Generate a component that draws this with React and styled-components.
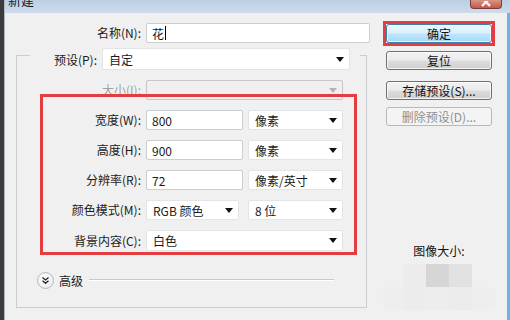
import React from 'react';
import styled, { createGlobalStyle, css } from 'styled-components';

const Global = createGlobalStyle`
  html, body { margin: 0; padding: 0; background: #f0f0f0; }
  body {
    font-family: "Noto Sans CJK SC", "Microsoft YaHei", "Liberation Sans", sans-serif;
    font-size: 12px;
    color: #1b1b1b;
  }
`;

const Screen = styled.div`
  width: 510px;
  height: 320px;
  overflow: hidden;
  display: flex;
  background: #f0f0f0;
`;

const DarkEdge = styled.div`
  width: 4px;
  flex: none;
  background: #3b3b3b;
`;

const Window = styled.div`
  flex: 1;
  display: flex;
  flex-direction: column;
  border-left: 1px solid #aeb8c2;
`;

const TitleBar = styled.div`
  height: 13px;
  flex: none;
  display: flex;
  align-items: flex-start;
  overflow: hidden;
  background: linear-gradient(#bccfe3, #cddced);
`;

const Title = styled.div`
  font-size: 13px;
  line-height: 16px;
  margin: -8px 0 0 3px;
  color: #1a1a1a;
`;

const CloseBtn = styled.div`
  margin-left: auto;
  margin-right: 8px;
  width: 30px;
  height: 8px;
  display: flex;
  justify-content: center;
  align-items: flex-end;
  border: 1px solid #7d3c33;
  border-top: none;
  border-radius: 0 0 4px 4px;
  background: linear-gradient(#d99486, #c4584a);
  overflow: hidden;
`;

const Body = styled.div`
  flex: 1;
  display: flex;
  border-right: 3px solid #6eb2e4;
`;

const Main = styled.div`
  width: 354px;
  padding: 10px 0 0 11px;
  display: flex;
  flex-direction: column;
`;

const Row = styled.div`
  display: flex;
  align-items: center;
  gap: 5px;
  height: ${p => p.$h || 20}px;
`;

const Label = styled.div`
  width: ${p => p.$w}px;
  flex: none;
  text-align: right;
  white-space: nowrap;
  line-height: 20px;
  color: ${p => (p.$disabled ? '#a3a3a3' : '#1b1b1b')};
`;

const TextBox = styled.div`
  width: ${p => (p.$w ? `${p.$w}px` : 'auto')};
  flex: ${p => (p.$w ? 'none' : '1')};
  height: 20px;
  box-sizing: border-box;
  border: 1px solid #c9ced3;
  border-radius: 2px;
  background: #fff;
  padding-left: 5px;
  display: flex;
  align-items: center;
  color: #1a1a1a;
  font-size: 12px;
`;

const Caret = styled.span`
  width: 1px;
  height: 14px;
  background: #000;
  margin-left: 1px;
`;

const SelectBox = styled.div`
  width: ${p => p.$w}px;
  flex: none;
  height: ${p => p.$h || 20}px;
  box-sizing: border-box;
  margin-left: ${p => p.$ml || 0}px;
  border: 1px solid ${p => (p.$disabled ? '#c6c6c6' : '#e2e4e6')};
  border-radius: 2px;
  background: ${p => (p.$disabled ? '#f0f0f0' : '#fff')};
  display: flex;
  align-items: center;
  padding: 0 5px 0 6px;
  color: #1a1a1a;
`;

const SelectValue = styled.span`
  flex: 1;
  white-space: nowrap;
`;

const Arrow = ({ disabled }) => (
  <svg width="8" height="5" viewBox="0 0 8 5">
    <path d="M0 0 H8 L4 5 Z" fill={disabled ? '#b4b4b4' : '#111'} />
  </svg>
);

const Select = ({ w, h, ml, value, disabled }) => (
  <SelectBox $w={w} $h={h} $ml={ml} $disabled={disabled}>
    <SelectValue>{value}</SelectValue>
    <Arrow disabled={disabled} />
  </SelectBox>
);

const Group = styled.div`
  width: 351px;
  margin-top: 5px;
  display: flex;
  flex-direction: column;
`;

const GroupHeader = styled.div`
  display: flex;
  align-items: center;
  height: 22px;
`;

const lineColor = '#c8cdd2';

const CornerLeft = styled.div`
  width: 13px;
  height: 14px;
  align-self: flex-end;
  border-top: 1px solid ${lineColor};
  border-left: 1px solid ${lineColor};
`;

const CornerRight = styled.div`
  flex: 1;
  height: 14px;
  margin-left: 10px;
  align-self: flex-end;
  border-top: 1px solid ${lineColor};
  border-right: 1px solid ${lineColor};
`;

const LegendLabel = styled.div`
  width: 67px;
  text-align: right;
  margin-right: 5px;
  white-space: nowrap;
`;

const GroupBody = styled.div`
  border: 1px solid ${lineColor};
  border-top: none;
  padding: 10px 0 19px 0;
  display: flex;
  flex-direction: column;
`;

const Highlight = styled.div`
  position: relative;
  width: 311px;
  margin: -6px 0 0 23px;
  border: 3px solid #e43d3f;
  padding: 13px 0 1px 0;
  display: flex;
  flex-direction: column;
  gap: 10px;
`;

const AdvancedRow = styled.div`
  display: flex;
  align-items: center;
  height: 16px;
  margin: 17px 32px 0 20px;
`;

const Chevron = styled.div`
  width: 15px;
  height: 15px;
  border-radius: 50%;
  border: 1px solid #b5b9bd;
  background: radial-gradient(circle at 40% 35%, #ffffff, #e4e6e8);
  display: flex;
  align-items: center;
  justify-content: center;
`;

const AdvancedText = styled.span`
  margin-left: 5px;
  font-size: 12px;
`;

const AdvancedLine = styled.div`
  flex: 1;
  margin-left: 6px;
  height: 0;
  border-top: 1px solid #c9c9c9;
  border-bottom: 1px solid #ffffff;
`;

const Side = styled.div`
  width: 112px;
  margin: 8px 0 0 13px;
  display: flex;
  flex-direction: column;
`;

const DefaultWrap = styled.div`
  border: 3px solid #e43d3f;
  display: flex;
  flex-direction: column;
`;

const Button = styled.div`
  height: 19px;
  box-sizing: border-box;
  margin: ${p => p.$m || '0 3px'};
  border: 1px solid #707070;
  border-radius: 3px;
  display: flex;
  align-items: center;
  justify-content: center;
  font-size: 12px;
  color: #111;
  white-space: nowrap;
  background: linear-gradient(#f2f2f2 0%, #ebebeb 48%, #dddddd 52%, #cfcfcf 100%);
  box-shadow: inset 0 0 0 1px rgba(255, 255, 255, 0.75);
  ${p =>
    p.$default &&
    css`
      border-color: #3c7fb1;
      background: linear-gradient(#eaf6fd 0%, #d9f0fc 48%, #bee6fd 52%, #a7d9f5 100%);
    `}
  ${p =>
    p.$disabled &&
    css`
      border-color: #b5b9bc;
      background: #f4f4f4;
      color: #8f8f8f;
      box-shadow: none;
    `}
`;

const SizeCaption = styled.div`
  margin-top: 118px;
  text-align: center;
  font-size: 12px;
  line-height: 14px;
  color: #111;
`;

const Preview = styled.div`
  margin-top: 6px;
  display: grid;
  grid-template-columns: 20px 23px 23px 23px 23px;
  grid-auto-rows: 23px;
`;

const Pixel = styled.div`
  background: ${p => p.$c};
`;

const pixels = [
  '#f0f0f0', '#ececec', '#d6d6d6', '#e1e1e1', '#f0f0f0',
  '#eeeeee', '#ececec', '#ededed', '#ebebeb', '#eeeeee',
];

const rows = [
  { label: '宽度(W):', value: '800', unit: '像素' },
  { label: '高度(H):', value: '900', unit: '像素' },
  { label: '分辨率(R):', value: '72', unit: '像素/英寸' },
];

export default function App() {
  return (
    <>
      <Global />
      <Screen>
        <DarkEdge />
        <Window>
          <TitleBar>
            <Title>新建</Title>
            <CloseBtn>
              <svg width="12" height="7" viewBox="0 0 12 7">
                <path d="M2 -3 L10 5 M10 -3 L2 5" stroke="#fff" strokeWidth="2.2" />
              </svg>
            </CloseBtn>
          </TitleBar>
          <Body>
            <Main>
              <Row>
                <Label $w={125}>名称(N):</Label>
                <TextBox>
                  花<Caret />
                </TextBox>
              </Row>
              <Group>
                <GroupHeader>
                  <CornerLeft />
                  <LegendLabel>预设(P):</LegendLabel>
                  <Select w={248} h={22} value="自定" />
                  <CornerRight />
                </GroupHeader>
                <GroupBody>
                  <Row>
                    <Label $w={124} $disabled>大小(I):</Label>
                    <Select w={197} value="" disabled />
                  </Row>
                  <Highlight>
                    {rows.map(r => (
                      <Row key={r.label}>
                        <Label $w={98}>{r.label}</Label>
                        <TextBox $w={97}>{r.value}</TextBox>
                        <Select w={95} value={r.unit} />
                      </Row>
                    ))}
                    <Row>
                      <Label $w={98}>颜色模式(M):</Label>
                      <Select w={93} value="RGB 颜色" />
                      <Select w={95} ml={4} value="8 位" />
                    </Row>
                    <Row $h={21}>
                      <Label $w={98}>背景内容(C):</Label>
                      <Select w={197} h={21} value="白色" />
                    </Row>
                  </Highlight>
                  <AdvancedRow>
                    <Chevron>
                      <svg width="7" height="7" viewBox="0 0 7 7">
                        <path d="M0.5 0.5 L3.5 3 L6.5 0.5 M0.5 3.8 L3.5 6.3 L6.5 3.8" fill="none" stroke="#222" strokeWidth="1.3" />
                      </svg>
                    </Chevron>
                    <AdvancedText>高级</AdvancedText>
                    <AdvancedLine />
                  </AdvancedRow>
                </GroupBody>
              </Group>
            </Main>
            <Side>
              <DefaultWrap>
                <Button $default $m="0">确定</Button>
              </DefaultWrap>
              <Button $m="5px 3px 0">复位</Button>
              <Button $m="11px 3px 0">存储预设(S)...</Button>
              <Button $m="7px 3px 0" $disabled>删除预设(D)...</Button>
              <SizeCaption>图像大小:</SizeCaption>
              <Preview>
                {pixels.map((c, i) => (
                  <Pixel key={i} $c={c} />
                ))}
              </Preview>
            </Side>
          </Body>
        </Window>
      </Screen>
    </>
  );
}
